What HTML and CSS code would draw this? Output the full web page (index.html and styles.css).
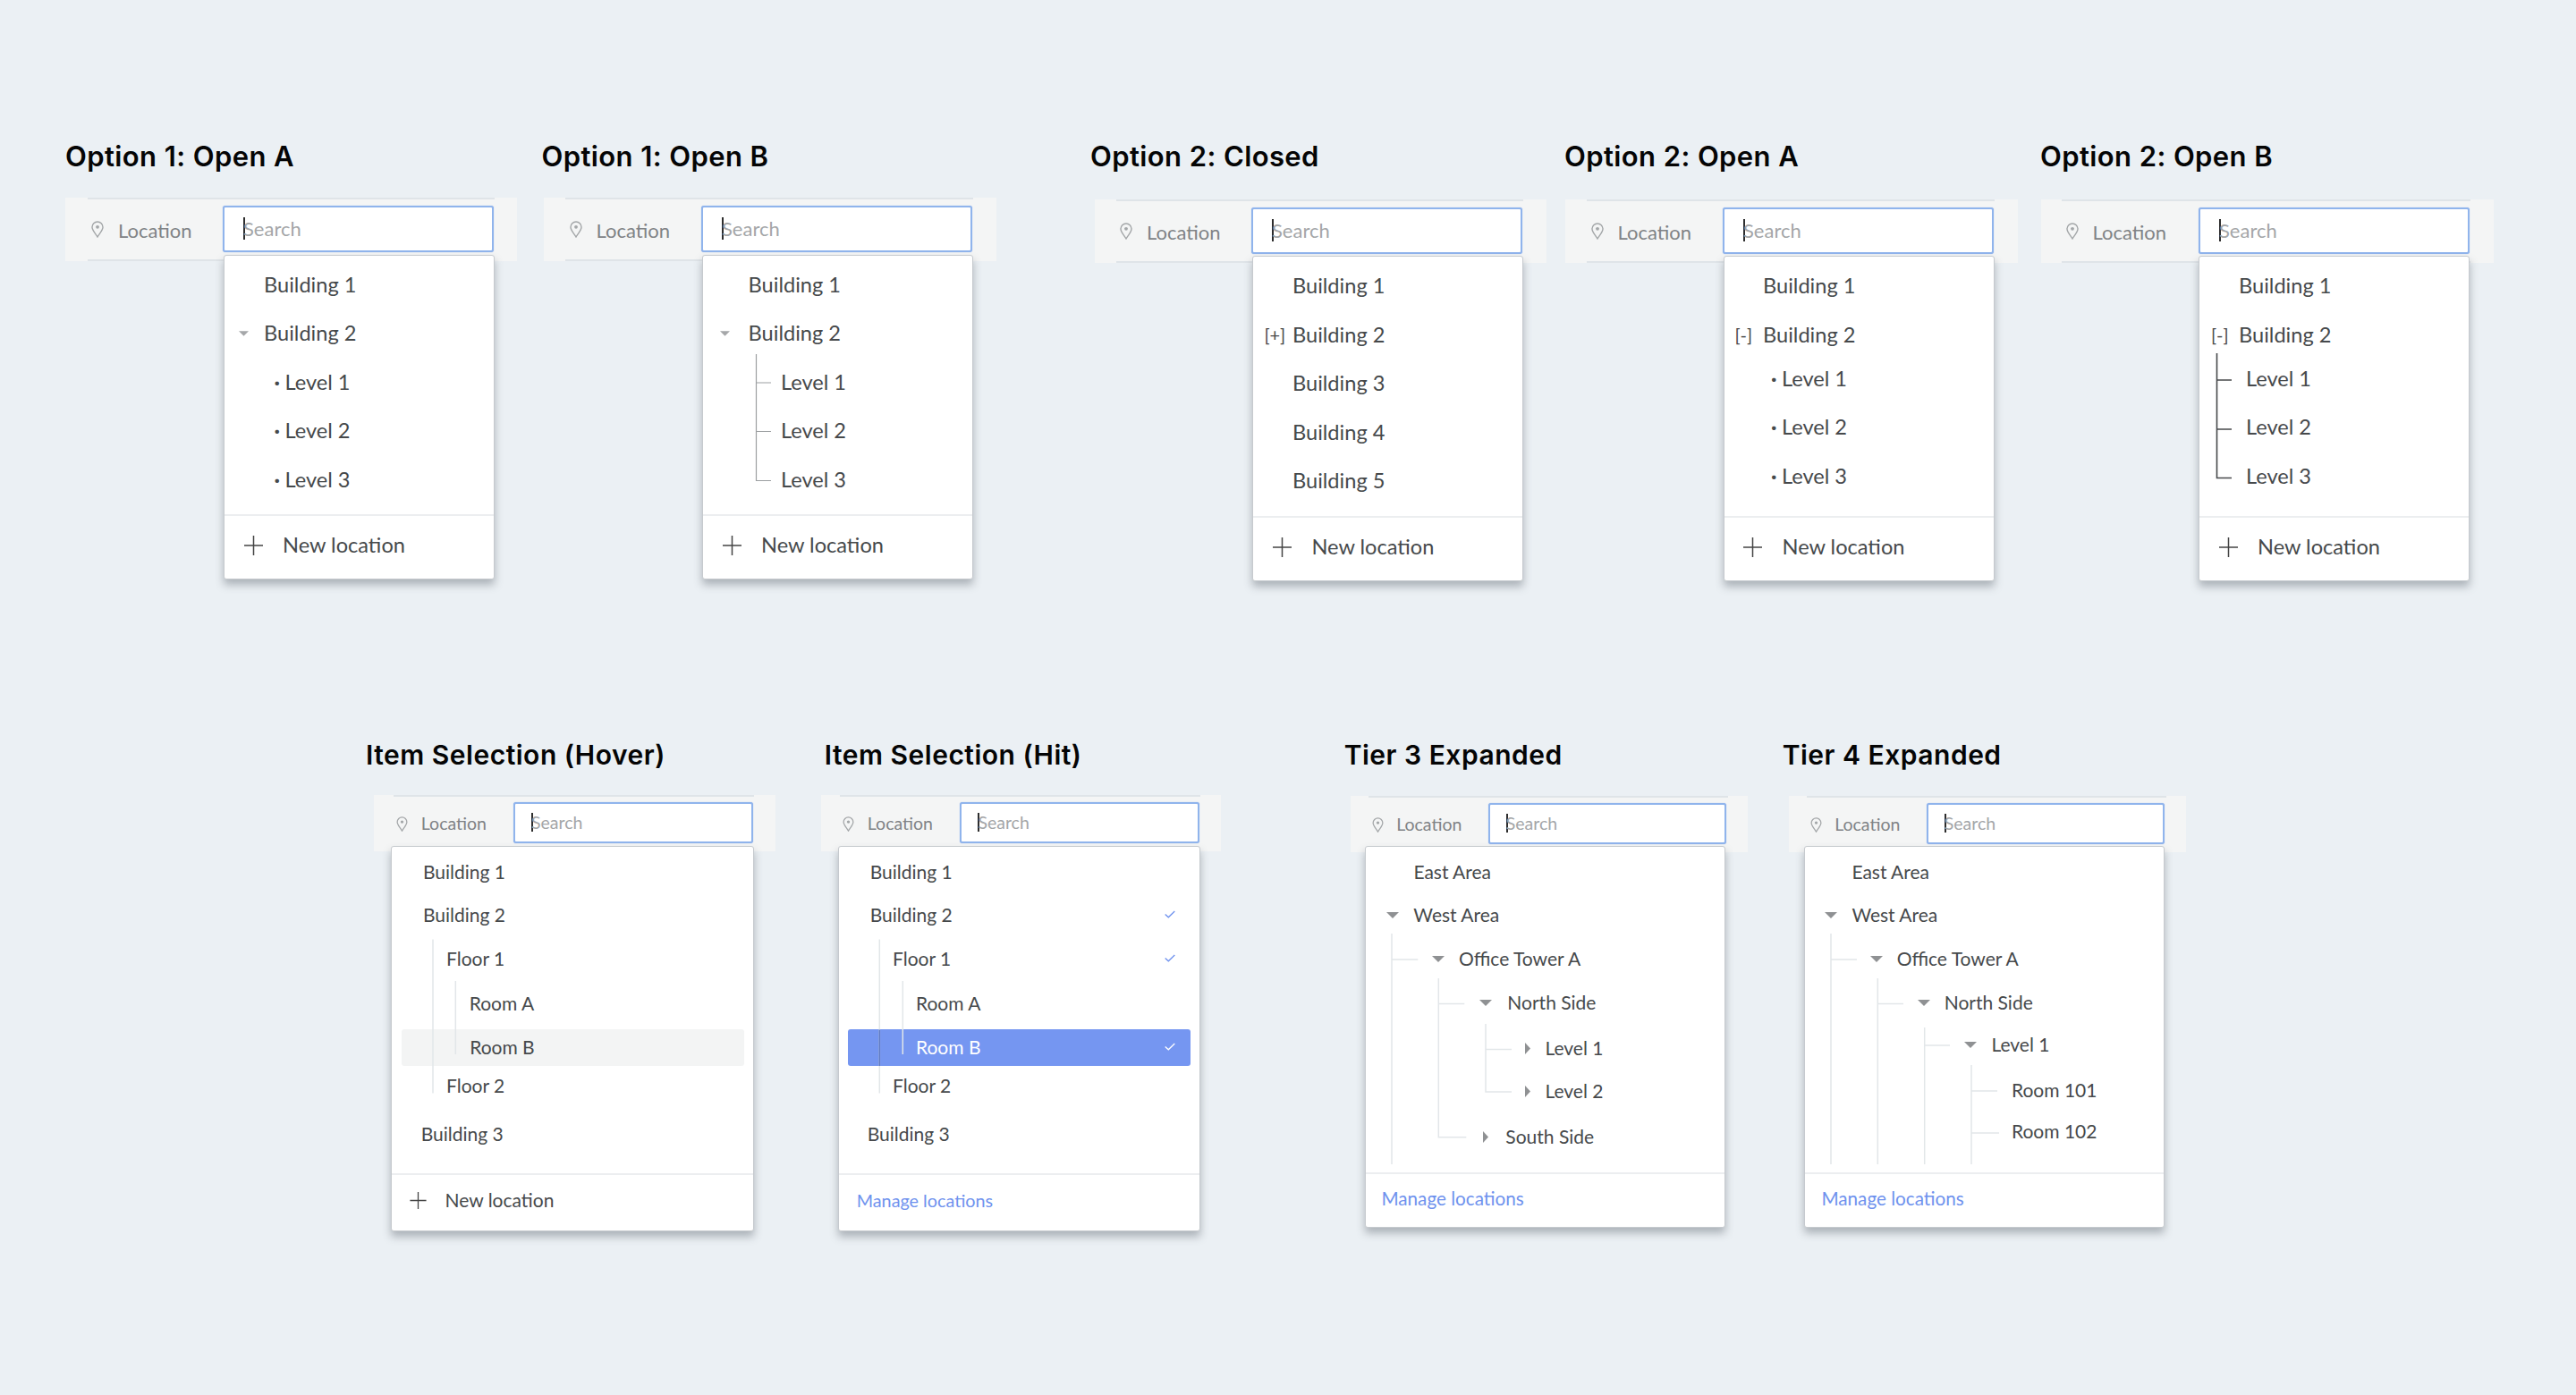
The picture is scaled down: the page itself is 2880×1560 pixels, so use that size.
FILE: index.html
```html
<!DOCTYPE html>
<html lang="en">
<head>
<meta charset="utf-8">
<title>Location picker options</title>
<link rel="stylesheet" href="styles.css">
</head>
<body>
<svg class="defs" aria-hidden="true">
  <symbol id="pin" viewBox="0 0 14 19"><path d="M7 18C4.6 13.8 1 10.6 1 7a6 6 0 0 1 12 0c0 3.600-3.600 6.800-6 11z" fill="none" stroke="currentColor" stroke-width="1.4"/><circle cx="7" cy="6.800" r="1.900" fill="currentColor"/></symbol>
  <symbol id="plus" viewBox="0 0 21 22"><path d="M10.500 0v22M0 11h21" fill="none" stroke="currentColor" stroke-width="1.500"/></symbol>
  <symbol id="down" viewBox="0 0 14 7"><path d="M0 0h14L7 7z" fill="currentColor"/></symbol>
  <symbol id="right" viewBox="0 0 6 13"><path d="M0 0l6 6.500L0 13z" fill="currentColor"/></symbol>
  <symbol id="check" viewBox="0 0 12 9"><path d="M.7 4.500l3.600 3.300L11.300 1" fill="none" stroke="currentColor" stroke-width="1.300"/></symbol>
</svg>
<main class="page">
  <section class="row row-top">

    <article class="panel oa">
      <h2 class="title">Option 1: Open A</h2>
      <div class="bar"><div class="bar-inner">
        <svg class="pin"><use href="#pin"/></svg><span class="loc">Location</span>
        <div class="input"><i class="caret"></i><span class="ph">Search</span></div>
      </div></div>
      <div class="drop">
        <div class="list">
          <div class="item lv0">Building 1</div>
          <div class="item ex0"><span class="lead"><svg class="chev-s"><use href="#down"/></svg></span>Building 2</div>
          <div class="item lv1"><span class="dot">·</span>Level 1</div>
          <div class="item lv1"><span class="dot">·</span>Level 2</div>
          <div class="item lv1"><span class="dot">·</span>Level 3</div>
        </div>
        <div class="foot"><svg class="plus"><use href="#plus"/></svg>New location</div>
      </div>
    </article>

    <article class="panel ob">
      <h2 class="title">Option 1: Open B</h2>
      <div class="bar"><div class="bar-inner">
        <svg class="pin"><use href="#pin"/></svg><span class="loc">Location</span>
        <div class="input"><i class="caret"></i><span class="ph">Search</span></div>
      </div></div>
      <div class="drop">
        <div class="list">
          <div class="item lv0">Building 1</div>
          <div class="item ex0"><span class="lead"><svg class="chev-s"><use href="#down"/></svg></span>Building 2</div>
          <div class="item lv1">Level 1</div>
          <div class="item lv1">Level 2</div>
          <div class="item lv1">Level 3</div>
        </div>
        <svg class="tree tree-grey"><path d="M59.500 110V251.500H76M59.500 142H76M59.500 196.500H76"/></svg>
        <div class="foot"><svg class="plus"><use href="#plus"/></svg>New location</div>
      </div>
    </article>

    <article class="panel oc low">
      <h2 class="title">Option 2: Closed</h2>
      <div class="bar"><div class="bar-inner">
        <svg class="pin"><use href="#pin"/></svg><span class="loc">Location</span>
        <div class="input"><i class="caret"></i><span class="ph">Search</span></div>
      </div></div>
      <div class="drop">
        <div class="list">
          <div class="item lv0">Building 1</div>
          <div class="item ex0"><span class="lead mark">[+]</span>Building 2</div>
          <div class="item lv0">Building 3</div>
          <div class="item lv0">Building 4</div>
          <div class="item lv0">Building 5</div>
        </div>
        <div class="foot"><svg class="plus"><use href="#plus"/></svg>New location</div>
      </div>
    </article>

    <article class="panel od low">
      <h2 class="title">Option 2: Open A</h2>
      <div class="bar"><div class="bar-inner">
        <svg class="pin"><use href="#pin"/></svg><span class="loc">Location</span>
        <div class="input"><i class="caret"></i><span class="ph">Search</span></div>
      </div></div>
      <div class="drop">
        <div class="list">
          <div class="item lv0">Building 1</div>
          <div class="item ex0"><span class="lead mark">[-]</span>Building 2</div>
          <div class="item lv1"><span class="dot">·</span>Level 1</div>
          <div class="item lv1"><span class="dot">·</span>Level 2</div>
          <div class="item lv1"><span class="dot">·</span>Level 3</div>
        </div>
        <div class="foot"><svg class="plus"><use href="#plus"/></svg>New location</div>
      </div>
    </article>

    <article class="panel oe low">
      <h2 class="title">Option 2: Open B</h2>
      <div class="bar"><div class="bar-inner">
        <svg class="pin"><use href="#pin"/></svg><span class="loc">Location</span>
        <div class="input"><i class="caret"></i><span class="ph">Search</span></div>
      </div></div>
      <div class="drop">
        <div class="list">
          <div class="item lv0">Building 1</div>
          <div class="item ex0"><span class="lead mark">[-]</span>Building 2</div>
          <div class="item lv1">Level 1</div>
          <div class="item lv1">Level 2</div>
          <div class="item lv1">Level 3</div>
        </div>
        <svg class="tree tree-dark"><path d="M19.500 108V247.500H36M19.500 138H36M19.500 193H36"/></svg>
        <div class="foot"><svg class="plus"><use href="#plus"/></svg>New location</div>
      </div>
    </article>
  </section>

  <section class="row row-bottom">
    <article class="panel small hov">
      <h2 class="title">Item Selection (Hover)</h2>
      <div class="bar"><div class="bar-inner">
        <svg class="pin"><use href="#pin"/></svg><span class="loc">Location</span>
        <div class="input"><i class="caret"></i><span class="ph">Search</span></div>
      </div></div>
      <div class="drop">
        <div class="list">
          <div class="item lv0">Building 1</div>
          <div class="item lv0">Building 2</div>
          <div class="item lv1">Floor 1</div>
          <div class="item lv2">Room A</div>
          <div class="item lv2 hl hover">Room B</div>
          <div class="item lv1">Floor 2</div>
          <div class="item lvb">Building 3</div>
        </div>
        <svg class="tree tree-light"><path d="M46 103.500V275.500M71.300 150V232"/></svg>
        <div class="foot"><svg class="plus"><use href="#plus"/></svg>New location</div>
      </div>
    </article>

    <article class="panel small hit">
      <h2 class="title">Item Selection (Hit)</h2>
      <div class="bar"><div class="bar-inner">
        <svg class="pin"><use href="#pin"/></svg><span class="loc">Location</span>
        <div class="input"><i class="caret"></i><span class="ph">Search</span></div>
      </div></div>
      <div class="drop">
        <div class="list">
          <div class="item lv0">Building 1</div>
          <div class="item lv0">Building 2<svg class="check"><use href="#check"/></svg></div>
          <div class="item lv1">Floor 1<svg class="check"><use href="#check"/></svg></div>
          <div class="item lv2">Room A</div>
          <div class="item lv2 hl selected">Room B<svg class="check"><use href="#check"/></svg></div>
          <div class="item lv1">Floor 2</div>
          <div class="item lvb">Building 3</div>
        </div>
        <svg class="tree tree-light"><path d="M45.300 103.500V275.500M71.300 150V232"/></svg>
        <svg class="tree tree-on-blue"><path d="M45.300 204.500V245"/></svg>
        <a class="foot manage">Manage locations</a>
      </div>
    </article>

    <article class="panel small t3 low">
      <h2 class="title">Tier 3 Expanded</h2>
      <div class="bar"><div class="bar-inner">
        <svg class="pin"><use href="#pin"/></svg><span class="loc">Location</span>
        <div class="input"><i class="caret"></i><span class="ph">Search</span></div>
      </div></div>
      <div class="drop">
        <div class="list">
          <div class="item lv0">East Area</div>
          <div class="item ex0"><span class="lead"><svg class="chev"><use href="#down"/></svg></span>West Area</div>
          <div class="item ex1"><span class="lead"><svg class="chev"><use href="#down"/></svg></span>Office Tower A</div>
          <div class="item ex2"><span class="lead"><svg class="chev"><use href="#down"/></svg></span>North Side</div>
          <div class="item ex3"><span class="lead"><svg class="chev-r"><use href="#right"/></svg></span>Level 1</div>
          <div class="item ex3"><span class="lead"><svg class="chev-r"><use href="#right"/></svg></span>Level 2</div>
          <div class="item exs"><span class="lead"><svg class="chev-r"><use href="#right"/></svg></span>South Side</div>
        </div>
        <svg class="tree tree-light"><path d="M29 97V355M29 126H58.300M81.300 147V324.700H112.300M81.300 175.600H110.300M134 198V274H163M134 226.600H163"/></svg>
        <a class="foot manage">Manage locations</a>
      </div>
    </article>

    <article class="panel small t4 low">
      <h2 class="title">Tier 4 Expanded</h2>
      <div class="bar"><div class="bar-inner">
        <svg class="pin"><use href="#pin"/></svg><span class="loc">Location</span>
        <div class="input"><i class="caret"></i><span class="ph">Search</span></div>
      </div></div>
      <div class="drop">
        <div class="list">
          <div class="item lv0">East Area</div>
          <div class="item ex0"><span class="lead"><svg class="chev"><use href="#down"/></svg></span>West Area</div>
          <div class="item ex1"><span class="lead"><svg class="chev"><use href="#down"/></svg></span>Office Tower A</div>
          <div class="item ex2"><span class="lead"><svg class="chev"><use href="#down"/></svg></span>North Side</div>
          <div class="item ex3"><span class="lead"><svg class="chev"><use href="#down"/></svg></span>Level 1</div>
          <div class="item lv4">Room 101</div>
          <div class="item lv4">Room 102</div>
        </div>
        <svg class="tree tree-light"><path d="M29 97V355M29 126H58M81.300 147V355M81.300 175.600H110M133.700 202V355M133.700 222H162M186 244V355M186 273H215M186 320H217"/></svg>
        <a class="foot manage">Manage locations</a>
      </div>
    </article>
  </section>
</main>
</body>
</html>
```

FILE: styles.css
```css
* { box-sizing: border-box; }
html, body { margin: 0; padding: 0; }
body {
  width: 2880px;
  height: 1560px;
  overflow: hidden;
  background: #ebf0f4;
  font-family: "Lato", "Liberation Sans", sans-serif;
  color: #46494b;
}
.defs { display: none; }
.page { padding-top: 153px; }
.row { display: flex; align-items: flex-start; }
.row-top { height: 669px; padding-left: 73px; }
.row-bottom { padding-left: 418px; }

/* panel shell */
.panel { flex: none; --font: 23.6px; font-size: var(--font); }
.title {
  margin: 0 0 24px;
  height: 44px;
  line-height: 44px;
  font-family: "Inter", "Liberation Sans", sans-serif;
  font-size: 31px;
  font-weight: 600;
  letter-spacing: 0.4px;
  white-space: nowrap;
  color: #050505;
}
.low .title { margin-bottom: 26px; }
.small { --font: 21px; }
.small .title { margin-bottom: 23px; font-size: 30px; letter-spacing: 0.5px; }
.small.low .title { margin-bottom: 24px; }

.bar { height: 71px; background: #f4f5f5; }
.bar-inner {
  display: flex;
  align-items: center;
  height: 100%;
  border-top: 2px solid #dfe4e8;
  border-bottom: 2px solid #dfe4e8;
}
.pin { flex: none; width: 14px; height: 19px; margin-left: 4.500px; color: #a3a6a8; }
.loc { margin-left: 16px; padding-top: 1px; font-size: 22px; color: #808386; }
.input {
  display: flex;
  align-items: center;
  flex: none;
  height: 52px;
  margin-left: auto;
  margin-right: 1px;
  margin-bottom: 2px;
  padding-left: 21px;
  background: #fff;
  border: 2px solid #90b4ec;
  border-radius: 3px;
  box-shadow: 0 0 1px #90b4ec;
  font-size: 22px;
}
.caret { flex: none; width: 2px; height: 25px; margin-right: -2px; background: #2d2d2d; }
.ph { color: #a4a6a8; }

.drop {
  position: relative;
  height: 363px;
  margin-top: -7px;
  background: #fff;
  border: 1px solid #c6cace;
  border-radius: 3px;
  box-shadow: 0 6px 10px rgba(70, 80, 90, 0.38);
}
.list {
  display: grid;
  align-items: start;
  height: 289px;
  padding-top: 9.500px;
  grid-template-rows: repeat(5, 54.500px);
}
.item {
  display: flex;
  align-items: center;
  height: 44px;
  white-space: nowrap;
}
.lead { flex: none; display: flex; align-items: center; width: var(--lead); }
.chev-s { width: 11px; height: 6px; margin-top: 2px; color: #a5a7a9; }
.chev { width: 14px; height: 7px; margin-top: 2px; color: #8f9193; }
.chev-r { width: 6px; height: 13px; margin-top: 2px; color: #8f9193; }
.mark { font-size: 20px; color: #4a4a4a; }
.dot { flex: none; width: 12px; margin-left: -0.500px; font-weight: 700; }
.foot {
  display: flex;
  align-items: center;
  height: 71px;
  padding: 0 0 5px 21.500px;
  border-top: 2px solid #eceef0;
}
.plus { flex: none; width: 21px; height: 22px; margin-top: 2px; margin-right: 22.500px; color: #444; }
.tree {
  position: absolute;
  left: 0;
  top: 0;
  width: 100%;
  height: 100%;
  pointer-events: none;
  fill: none;
}
.tree-grey { stroke: #9c9fa1; stroke-width: 1.200px; }
.tree-dark { stroke: #47494b; stroke-width: 1.600px; }
.tree-light { stroke: #e2e6e9; stroke-width: 1.500px; }
.tree-on-blue { stroke: #5f7bc4; stroke-width: 1.500px; }

/* top row placement */
.oa { width: 505px; }
.ob { width: 506px; margin-left: 30px; }
.oc { width: 505px; margin-left: 110px; }
.od { width: 506px; margin-left: 21px; }
.oe { width: 506px; margin-left: 26px; }
.ob .title { margin-left: -2.500px; }
.oc .title { margin-left: -5px; }
.od .title, .oe .title { margin-left: -1px; }
.oa .bar-inner { margin: 0 25px 0 24.500px; }
.ob .bar-inner { margin: 0 26px 0 24px; }
.oc .bar-inner { margin: 0 26px 0 23.500px; }
.od .bar-inner { margin: 0 26px 0 24px; }
.oe .bar-inner { margin: 0 26px 0 23px; }
.oa .input, .oc .input, .od .input, .oe .input, .ob .input { width: 303px; }
.oa .drop { width: 303px; margin-left: 177px; }
.ob .drop { width: 303px; margin-left: 177px; }
.oc .drop { width: 303px; margin-left: 176.400px; }
.od .drop { width: 303px; margin-left: 176.500px; }
.oe .drop { width: 303px; margin-left: 176px; }

.low .drop { margin-top: -8px; height: 364px; }
.low .list { height: 290px; padding-top: 10px; }
.od .list, .oe .list { grid-template-rows: 54.500px 49px 54.500px 54.500px 54.500px; }

.oa .lv0 { padding-left: 44px; }
.oa .ex0 { padding-left: 15.500px; --lead: 28.500px; }
.oa .lv1 { padding-left: 56px; }
.ob .lv0 { padding-left: 50.600px; }
.ob .ex0 { padding-left: 18.500px; --lead: 32.100px; }
.ob .lv1 { padding-left: 87px; }
.oc .lv0 { padding-left: 43.600px; }
.oc .ex0 { padding-left: 12px; --lead: 31.600px; }
.od .lv0 { padding-left: 43.500px; }
.od .ex0 { padding-left: 12px; --lead: 31.500px; }
.od .lv1 { padding-left: 53px; }
.oe .lv0 { padding-left: 44px; }
.oe .ex0 { padding-left: 13px; --lead: 31px; }
.oe .lv1 { padding-left: 52px; }

/* bottom row */
.small .bar { height: 63px; }
.small .bar-inner { border-bottom: 0; }
.small .pin { width: 13px; height: 17px; margin-left: 3.300px; }
.small .loc { margin-left: 14.500px; padding: 0 0 3px; font-size: 19.500px; }
.small .input { height: 46px; padding: 0 0 2px 18px; margin-bottom: 3px; font-size: 19.500px; }
.small .caret { height: 21px; }
.small .drop { height: 431px; margin-top: -6px; }
.small .list { height: 365px; padding-top: 7px; }
.small .item { height: 40.500px; }
.small .foot { height: 64px; padding: 0 0 7px 20px; }
.small .plus { width: 19px; height: 19px; margin-right: 20.500px; }

.hov { width: 449px; }
.hit { width: 447px; margin-left: 50.700px; }
.t3 { width: 444px; margin-left: 145px; }
.t4 { width: 444px; margin-left: 46px; }
.hov .title { margin-left: -9px; }
.hit .title { margin-left: 4px; }
.t3 .title, .t4 .title { margin-left: -7px; }
.hov .bar-inner { margin: 0 24px 0 22px; }
.hit .bar-inner { margin: 0 22.300px 0 21.300px; }
.t3 .bar-inner, .t4 .bar-inner { margin: 0 22px 0 20.700px; }
.hov .input, .hit .input { width: 268px; }
.t3 .input, .t4 .input { width: 266px; margin-right: 2px; }
.hov .drop { width: 406px; margin-left: 19px; }
.hit .drop { width: 405.300px; margin-left: 19px; }
.t3 .drop { width: 403px; margin-left: 16.700px; }
.t4 .drop { width: 403px; margin-left: 17px; }

.hov .list, .hit .list { grid-template-rows: 48px 49.400px 50px 48.100px 43.500px 54.500px 40.500px; }
.t3 .list { padding-top: 7.500px; height: 364px; grid-template-rows: 47.500px 49px 49.600px 50.400px 48px 51px 40.500px; }
.t4 .list { padding-top: 7.500px; height: 364px; grid-template-rows: 47.500px 49px 49.600px 46.400px 51px 46px 40.500px; }
.t3 .drop, .t4 .drop { height: 427px; }
.small.low .drop { margin-top: -7px; }

.hov .lv0, .hit .lv0 { padding-left: 35px; }
.hov .lv1 { padding-left: 61px; }
.hit .lv1 { padding-left: 60.300px; }
.hov .lv2 { padding-left: 86.700px; }
.hit .lv2 { padding-left: 86.300px; }
.hov .lvb { padding-left: 32.700px; }
.hit .lvb { padding-left: 32px; }
.hl { margin: 2px 10px 0; padding-bottom: 2px; border-radius: 3px; }
.hov .hl { padding-left: 76.700px; margin-left: 10.500px; }
.hit .hl { padding-left: 76.300px; }
.hover { background: #f3f4f4; }
.selected { background: #7596f1; color: #fff; }
.check { flex: none; width: 12px; height: 9px; margin-left: auto; margin-right: 27.300px; color: #6f92ee; }
.selected .check { color: #fff; margin-right: 17.300px; }
.manage { padding-left: 24px; font-size: 19.800px; color: #6f92ee; }

.t3 .lv0 { padding-left: 53px; }
.t3 .ex0 { padding-left: 22.300px; --lead: 30.700px; }
.t3 .ex1 { padding-left: 73.300px; --lead: 30.300px; }
.t3 .ex2 { padding-left: 126.300px; --lead: 31.700px; }
.t3 .ex3 { padding-left: 178px; --lead: 22px; }
.t3 .exs { padding-left: 130.300px; --lead: 25.700px; }
.t3 .manage { padding-left: 17px; height: 61px; padding-bottom: 5px; font-size: 20.700px; }

.t4 .lv0 { padding-left: 52.700px; }
.t4 .ex0 { padding-left: 22px; --lead: 30.700px; }
.t4 .ex1 { padding-left: 73.300px; --lead: 29.700px; }
.t4 .ex2 { padding-left: 126px; --lead: 30px; }
.t4 .ex3 { padding-left: 178.300px; --lead: 30.400px; }
.t4 .lv4 { padding-left: 231.300px; }
.t4 .manage { padding-left: 18.700px; height: 61px; padding-bottom: 5px; font-size: 20.700px; }
```
